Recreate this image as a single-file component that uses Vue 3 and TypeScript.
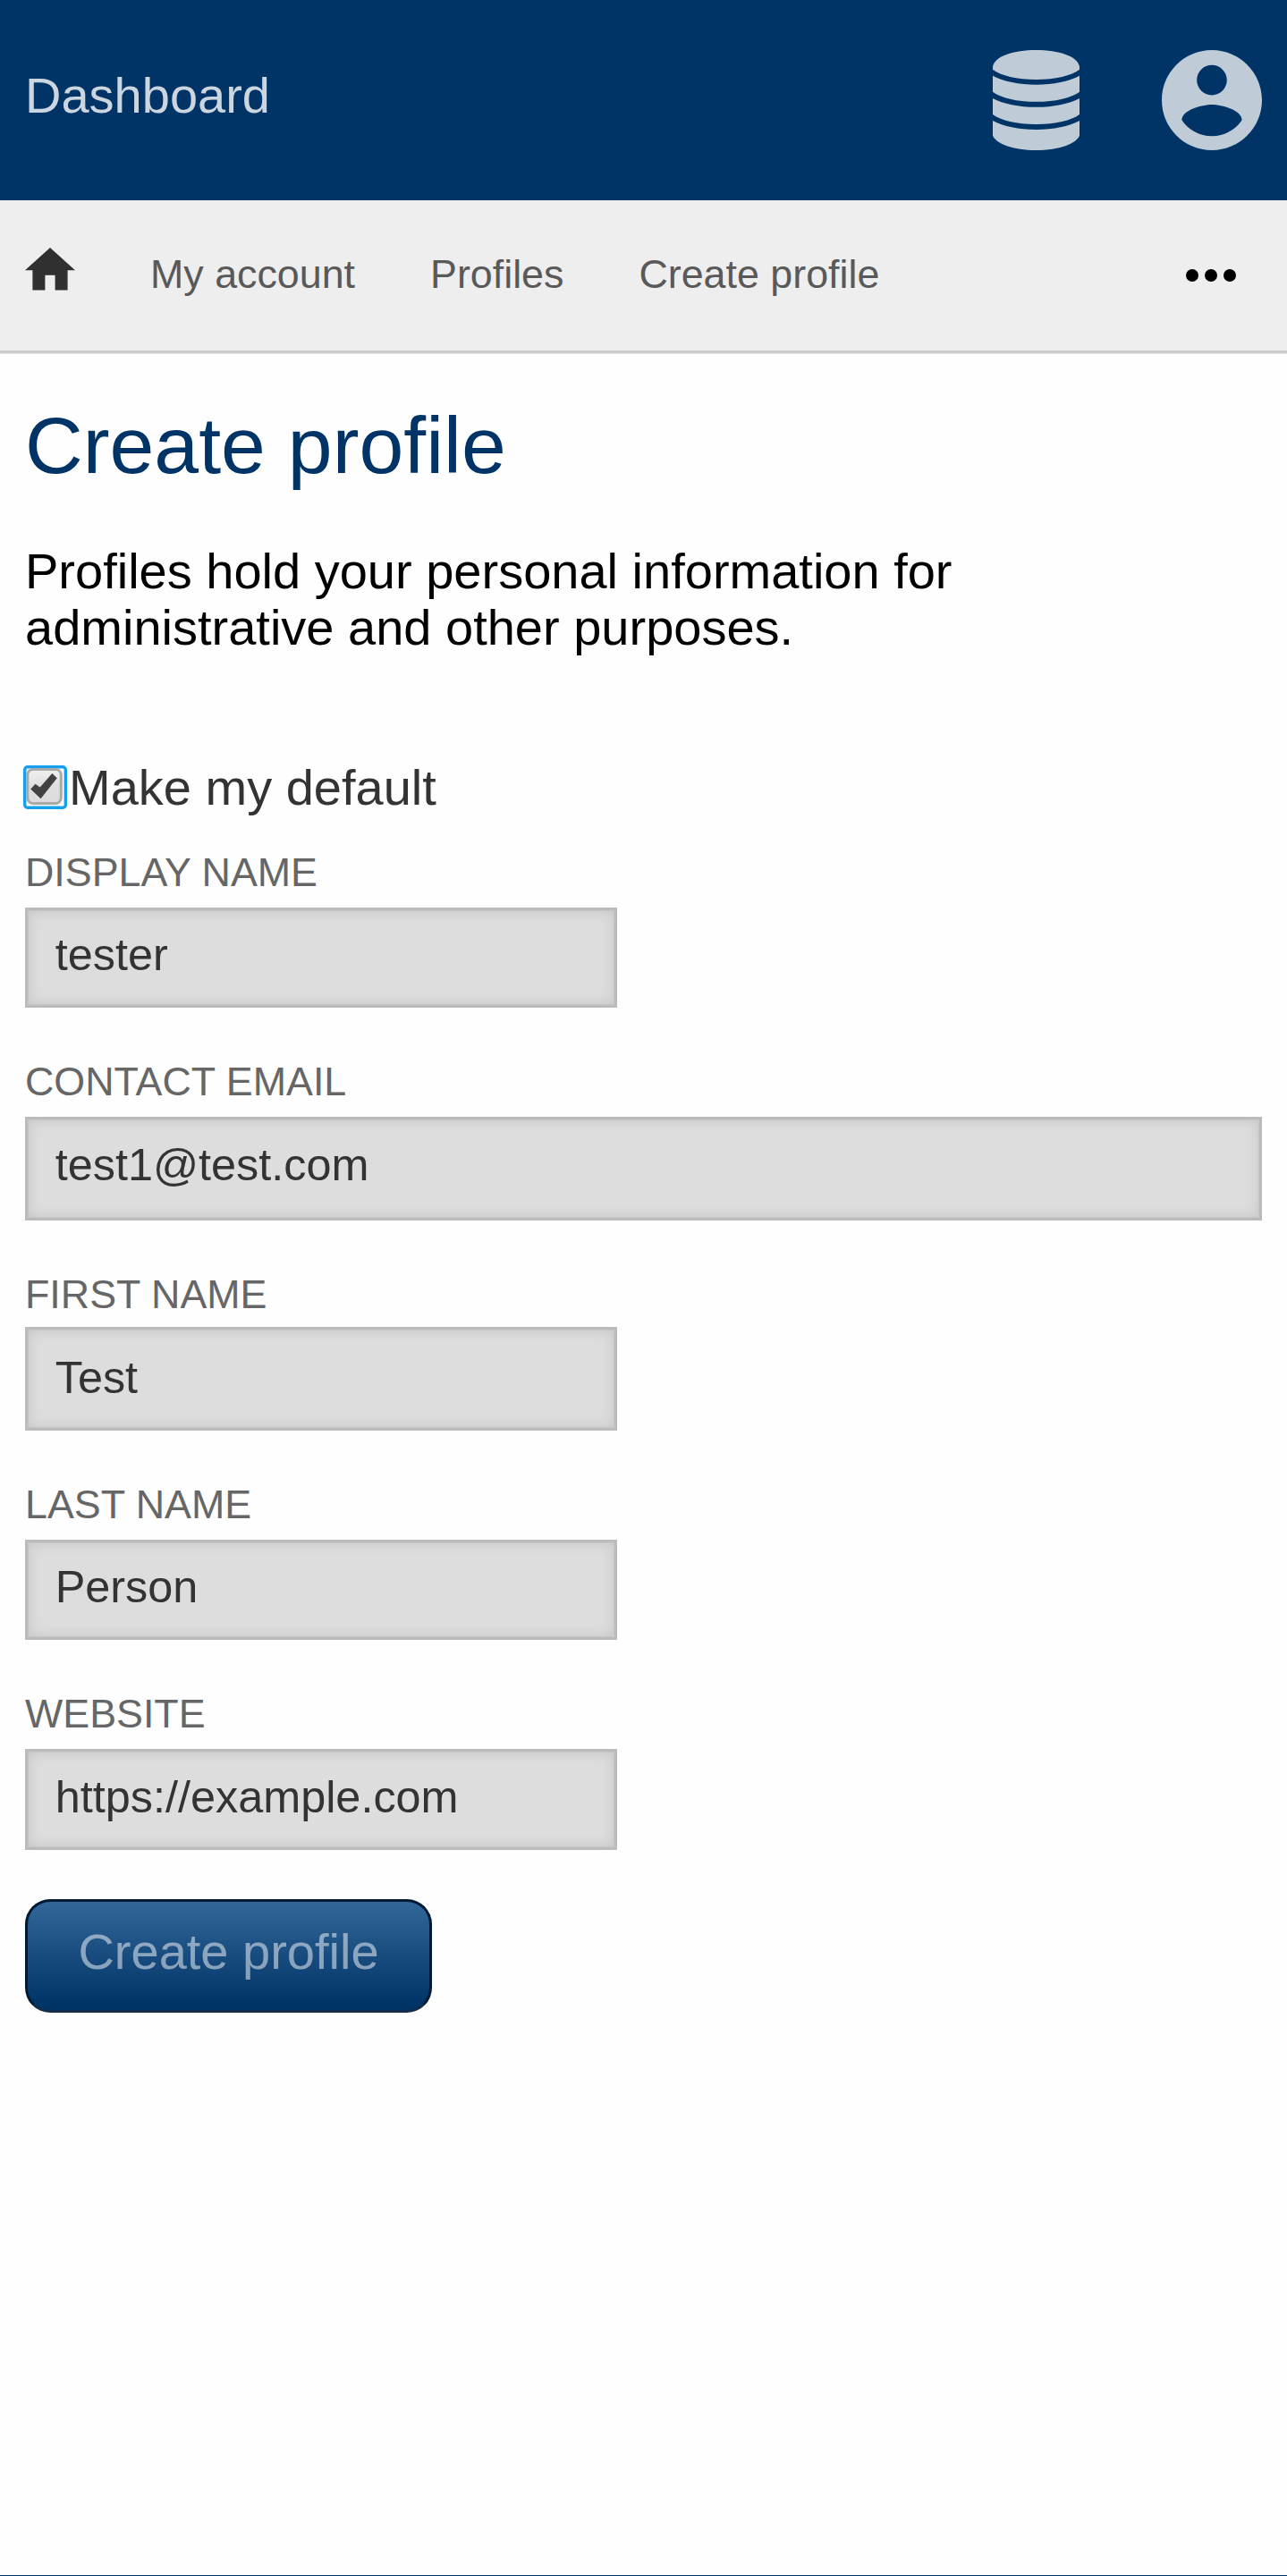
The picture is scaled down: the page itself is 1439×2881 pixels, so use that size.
<script setup lang="ts">
import { reactive, ref } from 'vue'

interface Field {
  id: string
  label: string
  type: string
  value: string
}

const crumbs: string[] = ['My account', 'Profiles', 'Create profile']
const isDefault = ref(true)
const fields = reactive<Field[]>([
  { id: 'display', label: 'DISPLAY NAME', type: 'text', value: 'tester' },
  { id: 'email', label: 'CONTACT EMAIL', type: 'text', value: 'test1@test.com' },
  { id: 'first', label: 'FIRST NAME', type: 'text', value: 'Test' },
  { id: 'last', label: 'LAST NAME', type: 'text', value: 'Person' },
  { id: 'website', label: 'WEBSITE', type: 'text', value: 'https://example.com' },
])
</script>

<template>
  <div class="page">
    <header class="topbar">
      <a class="brand">Dashboard</a>
      <div class="actions">
        <svg class="db" viewBox="0 0 97 112">
          <path d="M0 18.5C2 7 23 0 48.500 0S95 7 97 18.500V21.700C88 28.500 70 33 48.500 33S9 28.500 0 21.700Z" />
          <path d="M0 28.700C12 35 29 38.700 48.500 38.700S85 35 97 28.700V46.700C88 53.500 70 57.800 48.500 57.800S9 53.500 0 46.700Z" />
          <path d="M0 54C12 60.200 29 63.800 48.500 63.800S85 60.200 97 54V72C88 78.700 70 83 48.500 83S9 78.700 0 72Z" />
          <path d="M0 79C12 85.300 29 89 48.500 89S85 85.300 97 79V95.500C94 104.500 74 112 48.500 112S3 104.500 0 95.500Z" />
        </svg>
        <svg class="user" viewBox="2 2 20 20">
          <path d="M12 2C6.480 2 2 6.480 2 12s4.480 10 10 10 10-4.480 10-10S17.520 2 12 2zm0 3c1.660 0 3 1.340 3 3s-1.340 3-3 3-3-1.340-3-3 1.340-3 3-3zm0 14.200c-2.500 0-4.710-1.280-6-3.220.03-1.990 4-3.080 6-3.080 1.990 0 5.970 1.090 6 3.080-1.290 1.940-3.500 3.220-6 3.220z" />
        </svg>
      </div>
    </header>

    <nav class="crumbs">
      <svg class="home" viewBox="2 3 20 17"><path d="M10 20v-6h4v6h5v-8h3L12 3 2 12h3v8z" /></svg>
      <a v-for="c in crumbs" :key="c" class="crumb">{{ c }}</a>
      <svg class="more" viewBox="0 0 57 14">
        <circle cx="7" cy="7" r="7" /><circle cx="28" cy="7" r="7" /><circle cx="49" cy="7" r="7" />
      </svg>
    </nav>

    <main class="content">
      <h1>Create profile</h1>
      <p>Profiles hold your personal information for<br />administrative and other purposes.</p>

      <div class="default" @click="isDefault = !isDefault">
        <svg class="check" viewBox="0 0 49 49">
          <defs>
            <linearGradient id="face" x1="0" y1="0" x2="0" y2="1">
              <stop offset="0" stop-color="#f0f0f0" />
              <stop offset="0.5" stop-color="#dedede" />
              <stop offset="1" stop-color="#dcdcdc" />
            </linearGradient>
          </defs>
          <rect x="1.700" y="1.700" width="45.600" height="45.600" rx="3" fill="#fff" stroke="#14a0ee" stroke-width="3.400" />
          <rect x="4.800" y="4.500" width="37.500" height="38" rx="6" fill="url(#face)" stroke="#a9a9a9" stroke-width="3" />
          <path v-if="isDefault" d="M8.300 26.500L13.500 20.700L18.700 24.500L32.300 9L37.800 14.300L19.500 37.300Z" fill="#424242" />
        </svg>
        <span>Make my default</span>
      </div>

      <div v-for="f in fields" :key="f.id" class="field" :class="f.id">
        <label :for="f.id">{{ f.label }}</label>
        <input :id="f.id" v-model="f.value" :type="f.type" spellcheck="false" />
      </div>

      <button type="button">Create profile</button>
    </main>
    <footer></footer>
  </div>
</template>

<style>
body {
  background: #fff;
}
</style>

<style scoped>
.page {
  box-sizing: border-box;
  height: 2881px;
  display: flex;
  flex-direction: column;
  overflow: hidden;
  font-family: 'Liberation Sans', Arial, sans-serif;
  font-size: 56px;
  line-height: 63px;
  background: #fefefe;
}
svg {
  display: block;
  flex: none;
}
.topbar {
  box-sizing: border-box;
  height: 224px;
  padding: 56px 28px;
  display: flex;
  justify-content: space-between;
  background: #003366;
}
.brand {
  margin-top: 19px;
  color: #ccd6e0;
}
.actions {
  display: flex;
  gap: 92px;
  fill: #bfccd8;
}
.db {
  width: 97px;
  height: 112px;
}
.user {
  width: 112px;
  height: 112px;
}
.crumbs {
  height: 168px;
  padding: 0 56px 0 28px;
  display: flex;
  align-items: flex-start;
  gap: 84px;
  background: #eee;
  border-bottom: 3px solid #ccc;
  box-shadow: 0 1px 0 #e5e5e5;
  font-size: 44.8px;
  line-height: 50px;
}
.home {
  width: 56px;
  height: 47.6px;
  margin: 53px 0 0;
  fill: #303030;
}
.crumb {
  margin-top: 57px;
  color: #595959;
  white-space: nowrap;
}
.more {
  width: 57px;
  height: 14px;
  margin: 77px 0 0 auto;
}
.content {
  flex: 1;
  padding: 53px 28px 0;
}
h1 {
  margin: 0 0 59px;
  font-size: 89.6px;
  line-height: 100px;
  font-weight: 400;
  color: #003366;
}
p {
  margin: 0 0 116px;
  color: #000;
}
.default {
  display: flex;
  height: 63px;
  color: #333;
}
.check {
  width: 49px;
  height: 49px;
  margin: 7px 2px 0 -2px;
}
.field {
  margin-top: 57px;
}
.field.display {
  margin-top: 38px;
}
label {
  display: block;
  height: 50px;
  margin-bottom: 15px;
  font-size: 44.8px;
  line-height: 50px;
  color: #666;
}
input {
  box-sizing: border-box;
  display: block;
  width: 662px;
  height: 112px;
  margin: 0;
  padding: 21px 30.7px 28px;
  border: 3px solid #bbb;
  border-radius: 0;
  outline: none;
  background: #ddd;
  box-shadow: inset 0 0 0 1px #c6c6c6, inset 0 0 16px rgba(0, 0, 0, 0.12);
  font-family: inherit;
  font-size: 50.4px;
  line-height: 57px;
  color: #333;
}
.email input {
  width: 1383px;
  height: 116px;
  padding-top: 22px;
  padding-bottom: 31px;
}
.first label {
  margin-bottom: 12px;
}
.first input {
  height: 116px;
  padding-top: 25px;
}
.website input {
  height: 113px;
  padding-top: 22px;
}
button {
  box-sizing: border-box;
  display: block;
  width: 455px;
  height: 127px;
  margin: 55px 0 0;
  padding: 24px 0 37px;
  border: 3px solid #001a33;
  border-bottom-color: #142f4b;
  border-radius: 28px;
  background: linear-gradient(#336699, #003366 95%);
  font-family: inherit;
  font-size: 56px;
  line-height: 63px;
  color: rgba(255, 255, 255, 0.5);
}
footer {
  height: 1px;
  background: #003366;
}
</style>
